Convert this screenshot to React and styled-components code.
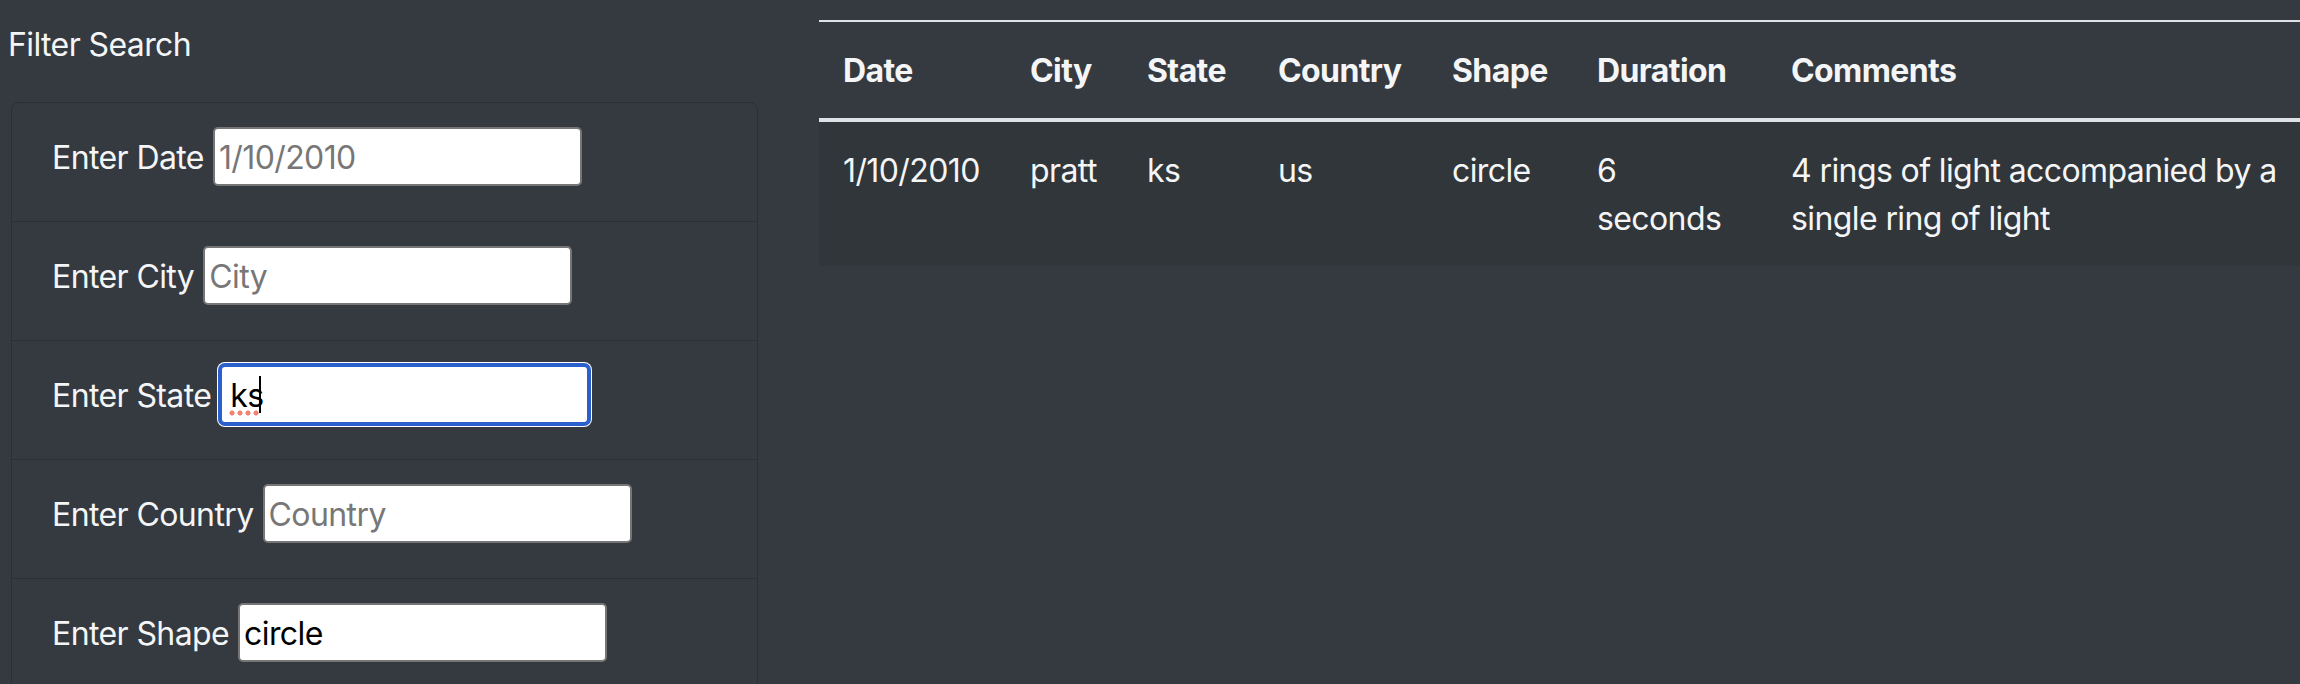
import React from 'react';
import styled, { createGlobalStyle } from 'styled-components';

const GlobalStyle = createGlobalStyle`
  html, body {
    margin: 0;
    padding: 0;
    background: #353a40;
  }
  body {
    font-family: Inter, "Liberation Sans", sans-serif;
    font-size: 32px;
    line-height: 48px;
    letter-spacing: -0.6px;
    color: #f4f5f6;
  }
  * {
    box-sizing: border-box;
  }
`;

const Page = styled.div`
  display: flex;
  align-items: flex-start;
  width: 2300px;
  height: 684px;
  overflow: hidden;
  background: #353a40;
`;

const Sidebar = styled.aside`
  width: 758px;
  flex-shrink: 0;
  padding: 21px 0 0 8px;
`;

const Heading = styled.h4`
  margin: 0 0 33px 0;
  font-size: 32px;
  line-height: 48px;
  font-weight: 400;
  color: #f4f5f6;
`;

const FilterList = styled.ul`
  list-style: none;
  margin: 0 0 0 3px;
  padding: 0;
  width: 747px;
  border: 1px solid #2c3035;
  border-radius: 8px;
`;

const FilterItem = styled.li`
  display: flex;
  align-items: center;
  padding: 24px 40px 35px 40px;
  border-top: 1px solid #2c3035;

  &:first-child {
    border-top: none;
  }
`;

const Label = styled.label`
  margin-right: 9px;
  padding-top: 2px;
  white-space: nowrap;
  color: #f4f5f6;
`;

const Field = styled.span`
  position: relative;
  display: inline-flex;
`;

const TextInput = styled.input`
  width: 369px;
  height: 59px;
  padding: 2px 4px 0;
  font-family: Inter, "Liberation Sans", sans-serif;
  font-size: 32px;
  letter-spacing: -0.6px;
  color: #000;
  background: #fff;
  border: 2px solid ${p => (p.$focused ? '#2b5fcb' : '#767676')};
  border-radius: 5px;
  outline: none;
  box-shadow: ${p => (p.$focused ? '0 0 0 2px #2b5fcb, 0 0 0 3px #fff' : 'none')};
  padding-left: ${p => (p.$focused ? '8px' : '4px')};

  &::placeholder {
    color: #777;
  }
`;

const Caret = styled.span`
  position: absolute;
  left: 39px;
  top: 11px;
  width: 2px;
  height: 37px;
  background: #000;
`;

const SpellDots = styled.span`
  position: absolute;
  left: 8px;
  top: 45px;
  width: 32px;
  height: 6px;
  background: radial-gradient(circle, #f2846f 2.3px, transparent 2.8px) 0 0 / 8px 6px repeat-x;
`;

const TableWrap = styled.div`
  margin-left: 61px;
  padding-top: 20px;
`;

const Table = styled.table`
  width: 1495px;
  table-layout: fixed;
  border-collapse: collapse;
  color: #f4f5f6;
`;

const HeadCell = styled.th`
  width: ${p => p.$w}px;
  padding: 25px 24px 23px;
  text-align: left;
  font-weight: 700;
  vertical-align: bottom;
  border-top: 2px solid #dee2e6;
  border-bottom: 4px solid #dee2e6;
`;

const BodyRow = styled.tr`
  background: #31363b;
`;

const Cell = styled.td`
  padding: 25px 24px 23px;
  vertical-align: top;
`;

const filters = [
  { label: 'Enter Date', placeholder: '1/10/2010' },
  { label: 'Enter City', placeholder: 'City' },
  { label: 'Enter State', placeholder: 'State', value: 'ks', focused: true },
  { label: 'Enter Country', placeholder: 'Country' },
  { label: 'Enter Shape', placeholder: 'Shape', value: 'circle' },
];

const columns = [
  { title: 'Date', w: 187 },
  { title: 'City', w: 117 },
  { title: 'State', w: 131 },
  { title: 'Country', w: 174 },
  { title: 'Shape', w: 145 },
  { title: 'Duration', w: 194 },
  { title: 'Comments', w: 547 },
];

const sightings = [
  {
    datetime: '1/10/2010',
    city: 'pratt',
    state: 'ks',
    country: 'us',
    shape: 'circle',
    duration: '6 seconds',
    comments: '4 rings of light accompanied by a single ring of light',
  },
];

export default function App() {
  return (
    <>
      <GlobalStyle />
      <Page>
        <Sidebar>
          <Heading>Filter Search</Heading>
          <FilterList>
            {filters.map(f => (
              <FilterItem key={f.label}>
                <Label>{f.label}</Label>
                <Field>
                  <TextInput
                    type="text"
                    spellCheck={false}
                    placeholder={f.placeholder}
                    defaultValue={f.value}
                    $focused={f.focused}
                  />
                  {f.focused && (
                    <>
                      <SpellDots />
                      <Caret />
                    </>
                  )}
                </Field>
              </FilterItem>
            ))}
          </FilterList>
        </Sidebar>
        <TableWrap>
          <Table>
            <thead>
              <tr>
                {columns.map(c => (
                  <HeadCell key={c.title} $w={c.w}>{c.title}</HeadCell>
                ))}
              </tr>
            </thead>
            <tbody>
              {sightings.map((s, i) => (
                <BodyRow key={i}>
                  <Cell>{s.datetime}</Cell>
                  <Cell>{s.city}</Cell>
                  <Cell>{s.state}</Cell>
                  <Cell>{s.country}</Cell>
                  <Cell>{s.shape}</Cell>
                  <Cell>{s.duration}</Cell>
                  <Cell>{s.comments}</Cell>
                </BodyRow>
              ))}
            </tbody>
          </Table>
        </TableWrap>
      </Page>
    </>
  );
}
